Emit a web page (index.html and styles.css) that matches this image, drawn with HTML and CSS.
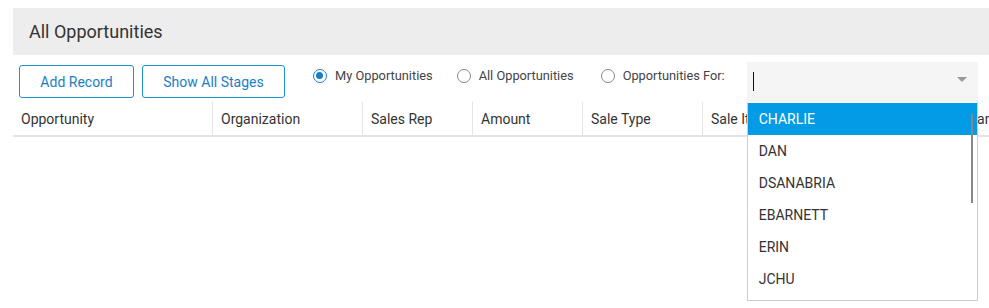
FILE: index.html
```html
<!DOCTYPE html>
<html lang="en">
<head>
<meta charset="UTF-8">
<meta name="viewport" content="width=device-width, initial-scale=1.0">
<title>All Opportunities</title>
<link rel="stylesheet" href="styles.css">
</head>
<body>
<div class="page">
<div class="title-bar">All Opportunities</div>

<div class="toolbar">
<button class="btn btn-add">Add Record</button>
<button class="btn btn-stages">Show All Stages</button>
<div class="radios">
<label class="radio"><span class="dot checked"></span>My Opportunities</label>
<label class="radio"><span class="dot"></span>All Opportunities</label>
<label class="radio"><span class="dot"></span>Opportunities For:</label>
</div>
<div class="combo">
<span class="caret"></span>
<span class="arrow"></span>
<div class="combo-list">
<div class="item active">CHARLIE</div>
<div class="item">DAN</div>
<div class="item">DSANABRIA</div>
<div class="item">EBARNETT</div>
<div class="item">ERIN</div>
<div class="item">JCHU</div>
<div class="thumb"></div>
</div>
</div>
</div>

<div class="grid-head">
<div class="col c1">Opportunity</div>
<div class="col c2">Organization</div>
<div class="col c3">Sales Rep</div>
<div class="col c4">Amount</div>
<div class="col c5">Sale Type</div>
<div class="col c6">Sale Item</div>
<div class="col c7">Team</div>
</div>
<div class="grid-body"></div>
</div>
</body>
</html>
```

FILE: styles.css
```css
*{margin:0;padding:0;box-sizing:border-box;}
html,body{min-height:100%;}
body{font-family:Roboto,"Liberation Sans",sans-serif;background:#fff;color:#333;min-height:100vh;}
.page{padding:8px 0 0 13px;}
.title-bar{height:47px;background:#ededed;padding-left:16px;font-size:18px;line-height:47px;color:#333;}
.toolbar{display:flex;align-items:flex-start;height:47px;}
.btn{height:33px;margin-top:10px;margin-left:6px;background:#fff;border:1px solid #1f8fd2;border-radius:3px;color:#1a7ec4;font-family:inherit;font-size:14px;text-align:center;}
.btn-add{width:115px;}
.btn-stages{width:143px;margin-left:8px;}
.radios{display:flex;margin-left:28px;margin-top:13px;}
.radio{display:flex;align-items:center;gap:8px;font-size:12.8px;line-height:16px;color:#444;}
.radio:nth-child(1){margin-right:24px;}
.radio:nth-child(2){margin-right:27px;}
.dot{width:14px;height:14px;border:1.5px solid #888;border-radius:50%;position:relative;}
.dot.checked{border-color:#1a7ec4;}
.dot.checked::after{content:"";position:absolute;left:2px;top:2px;width:7px;height:7px;border-radius:50%;background:#1a7ec4;}
.combo{position:relative;margin-left:22px;margin-top:7px;width:231px;height:40px;background:#f5f5f5;z-index:5;}
.caret{position:absolute;left:6px;top:10px;width:1px;height:19px;background:#111;}
.arrow{position:absolute;right:11px;top:15px;border-left:5px solid transparent;border-right:5px solid transparent;border-top:5px solid #999;}
.combo-list{position:absolute;left:0;top:40px;width:231px;height:199px;background:#fff;border:1px solid #ccc;border-top:0;overflow:hidden;}
.item{height:32px;line-height:32px;padding-left:11px;font-size:14px;color:#333;}
.item.active{background:#039be5;color:#fff;margin-top:1px;}
.thumb{position:absolute;right:4px;top:12px;width:2px;height:89px;background:#888;}
.grid-head{display:flex;height:35px;border-bottom:2px solid #e4e4e4;white-space:nowrap;overflow:hidden;}
.col{padding-left:8px;font-size:14px;line-height:35px;color:#333;border-left:1px solid #e4e4e4;flex-shrink:0;}
.c1{width:199px;border-left:0;}
.c2{width:150px;}
.c3{width:110px;}
.c4{width:110px;}
.c5{width:120px;}
.c6{width:251px;}
.c7{width:100px;}
.grid-body{height:170px;}
```
